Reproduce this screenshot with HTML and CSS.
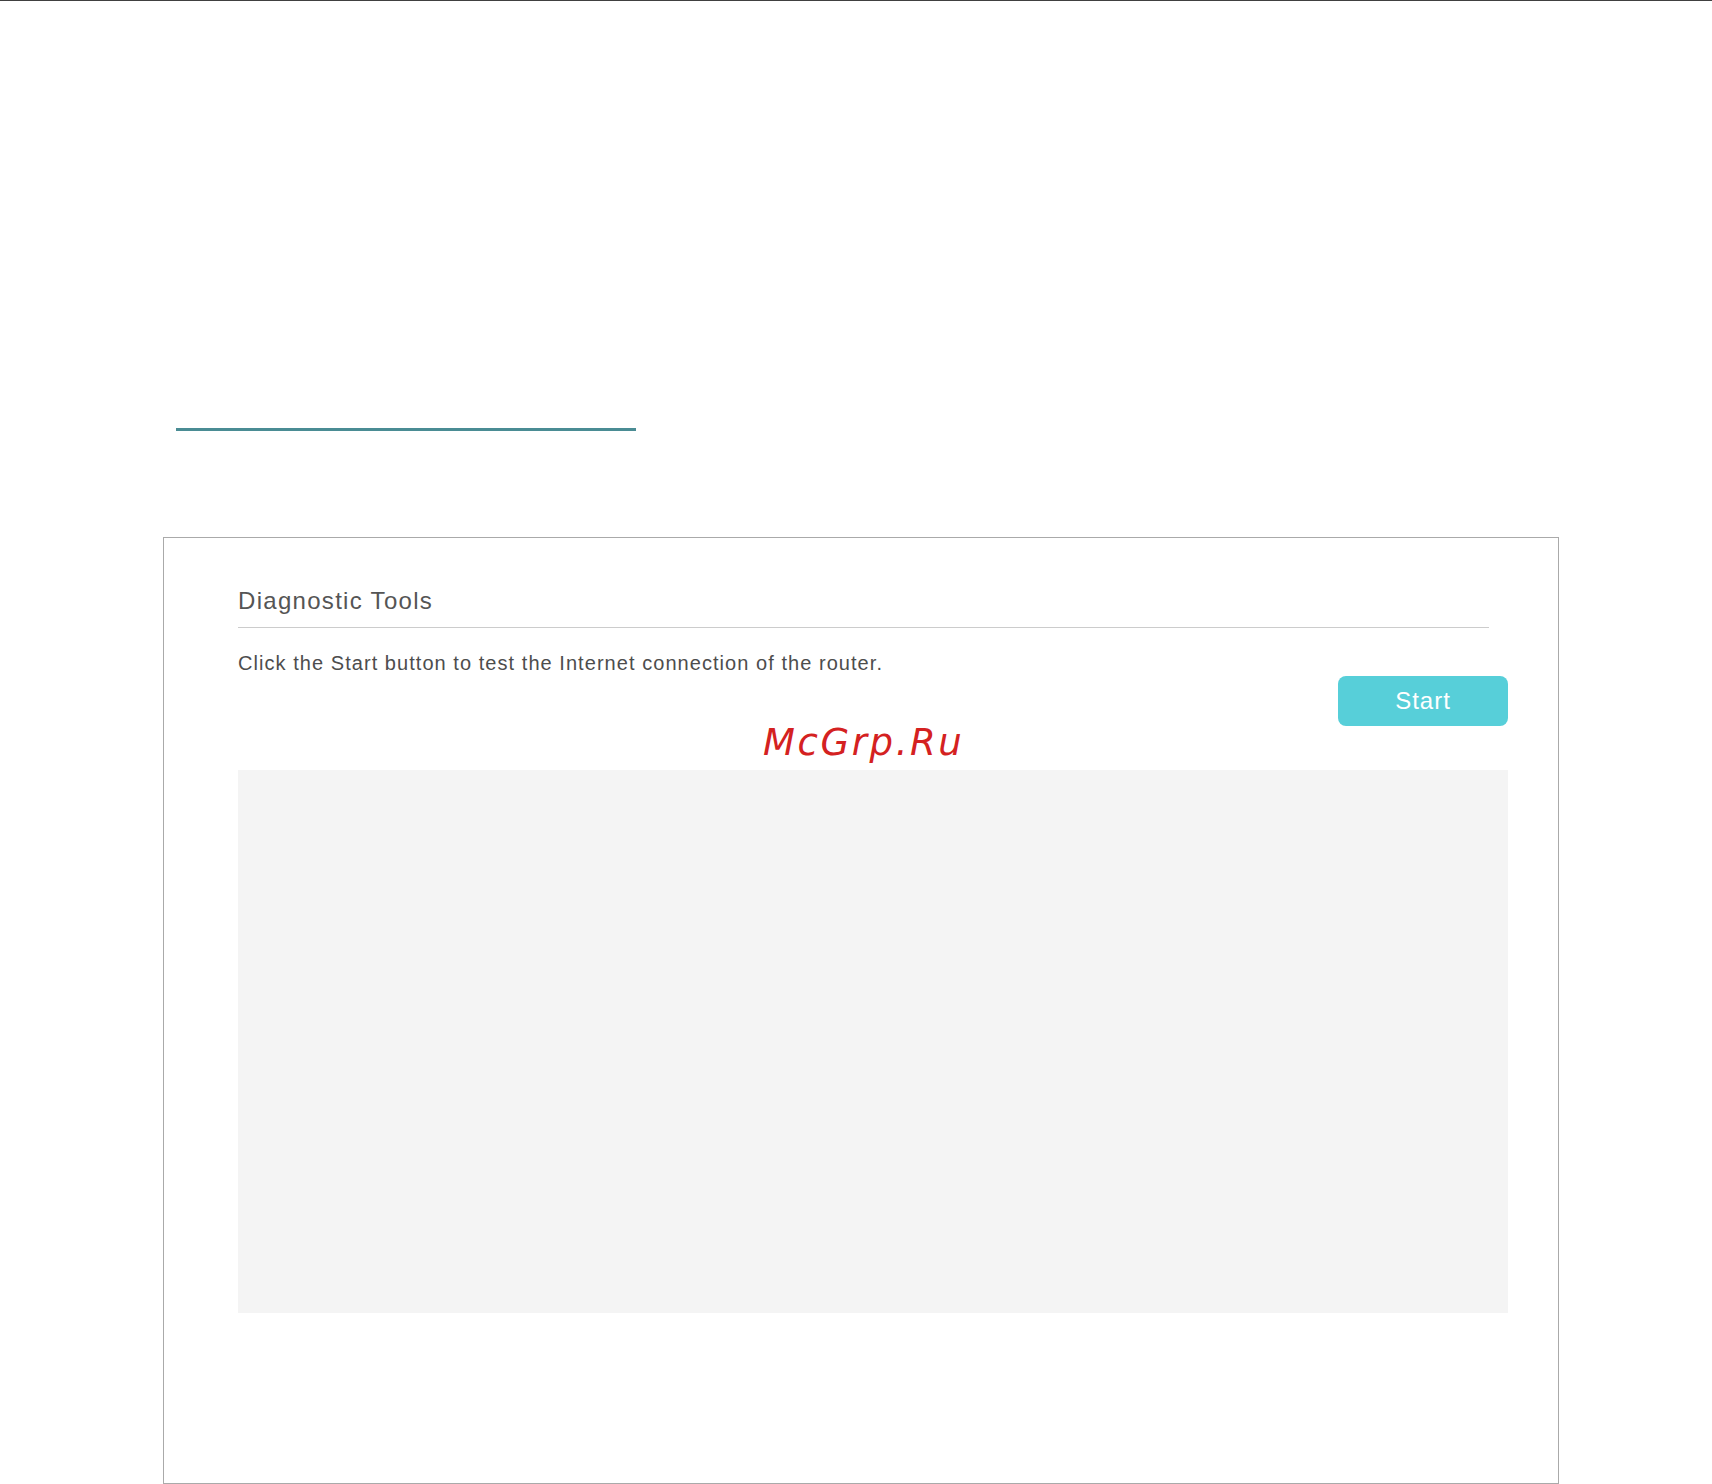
FILE: index.html
```html
<!DOCTYPE html>
<html lang="en">
<head>
<meta charset="utf-8">
<title>Diagnostic Tools</title>
<link rel="stylesheet" href="styles.css">
</head>
<body>
<div class="page">
  <div class="tab-underline"></div>
  <section class="panel">
    <h2 class="panel-title">Diagnostic Tools</h2>
    <p class="panel-desc">Click the Start button to test the Internet connection of the router.</p>
    <div class="actions">
      <button class="btn-start" type="button">Start</button>
    </div>
    <div class="output"></div>
    <div class="watermark">McGrp.Ru</div>
  </section>
</div>
</body>
</html>
```
FILE: styles.css
```css
html, body {
  margin: 0;
  padding: 0;
  background: #ffffff;
}
body {
  font-family: "Liberation Sans", Arial, sans-serif;
  border-top: 1px solid #404040;
}
.page {
  width: 1712px;
  min-height: 1483px;
  box-sizing: border-box;
  padding-top: 427px;
}
.tab-underline {
  margin-left: 176px;
  width: 460px;
  height: 3px;
  background: #4a8c94;
}
.panel {
  position: relative;
  margin-top: 106px;
  margin-left: 163px;
  width: 1396px;
  height: 947px;
  box-sizing: border-box;
  border: 1px solid #aaaaaa;
  padding: 49px 50px 0 74px;
}
.panel-title {
  margin: 0 19px 0 0;
  padding-bottom: 12px;
  border-bottom: 1px solid #cccccc;
  font-size: 24px;
  line-height: 28px;
  font-weight: normal;
  letter-spacing: 1.3px;
  color: #555555;
}
.panel-desc {
  margin: 23px 0 0 0;
  font-size: 20px;
  line-height: 25px;
  letter-spacing: 1.05px;
  color: #4d4d4d;
}
.actions {
  display: flex;
  justify-content: flex-end;
}
.btn-start {
  width: 170px;
  height: 50px;
  border: none;
  border-radius: 8px;
  background: #57cfd9;
  color: #ffffff;
  font-family: "Liberation Sans", Arial, sans-serif;
  font-size: 24px;
  letter-spacing: 1px;
  padding: 0;
}
.output {
  margin-top: 44px;
  height: 543px;
  background: #f4f4f4;
}
.watermark {
  position: absolute;
  left: 599px;
  top: 183px;
  font-family: "DejaVu Sans", sans-serif;
  font-style: italic;
  font-size: 37px;
  letter-spacing: 2.6px;
  color: #d42121;
}
```
